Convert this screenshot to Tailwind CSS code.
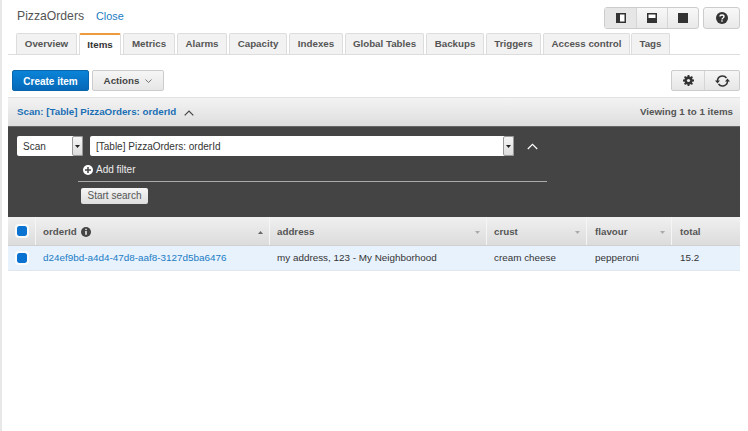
<!DOCTYPE html>
<html lang="en">
<head>
  <meta charset="UTF-8" />
  <title>PizzaOrders</title>
  <script src="https://cdn.jsdelivr.net/npm/@tailwindcss/browser@4"></script>
</head>
<body class="bg-white w-[748px] h-[431px] overflow-hidden font-['Liberation_Sans',Arial,sans-serif] text-[#444]">
  <div class="h-[431px] w-[748px] pl-[6px] pr-[8px] border-l-2 border-[#e8e8e8]">

    <!-- Title row -->
    <div class="h-[33px] flex items-start">
      <span class="text-[12.2px] ml-[9px] mt-[8px] text-[#555] leading-4">PizzaOrders</span>
      <a class="text-[10.8px] ml-[12px] mt-[8px] text-[#1a7cc4] leading-4">Close</a>
      <div class="ml-auto mt-[7px] flex gap-[4px]">
        <div class="flex h-[22px] border border-[#ccc] rounded-[3px] bg-linear-to-b from-[#f8f8f8] to-[#e9e9e9]">
          <div class="w-[32px] flex items-center justify-center bg-[#e6e6e6] border-r border-[#d5d5d5]">
            <svg width="10" height="10" viewBox="0 0 10 10"><rect x="0.75" y="0.75" width="8.5" height="8.5" fill="#fff" stroke="#333" stroke-width="1.5"/><rect x="0" y="0" width="4" height="10" fill="#333"/></svg>
          </div>
          <div class="w-[31px] flex items-center justify-center border-r border-[#d5d5d5]">
            <svg width="10" height="10" viewBox="0 0 10 10"><rect x="0.75" y="0.75" width="8.5" height="8.5" fill="#fff" stroke="#333" stroke-width="1.5"/><rect x="0" y="5" width="10" height="5" fill="#333"/></svg>
          </div>
          <div class="w-[30px] flex items-center justify-center">
            <svg width="10" height="10" viewBox="0 0 10 10"><rect width="10" height="10" fill="#333"/></svg>
          </div>
        </div>
        <div class="w-[37px] h-[22px] border border-[#ccc] rounded-[3px] bg-linear-to-b from-[#f8f8f8] to-[#e9e9e9] flex items-center justify-center">
          <svg width="12" height="12" viewBox="0 0 12 12"><circle cx="6" cy="6" r="6" fill="#333"/><path d="M4 4.6C4 3.5 4.9 3 6 3s2 .6 2 1.6c0 1.5-2 1.3-2 2.8" fill="none" stroke="#fff" stroke-width="1.4"/><rect x="5.3" y="8.3" width="1.4" height="1.4" fill="#fff"/></svg>
        </div>
      </div>
    </div>

    <!-- Tabs -->
    <div class="h-[22px] flex border-b border-[#ddd] pl-[8px] text-[9.75px] font-bold text-[#555]">
      <div class="w-[61px] h-[21px] mr-[2px] pt-[1px] bg-[#f2f2f2] border border-b-0 border-[#ddd] rounded-t-[2px] flex items-center justify-center">Overview</div>
      <div class="w-[42px] h-[22px] mr-[2px] pt-[1px] bg-white border border-b-0 border-[#ddd] border-t-2 border-t-[#ec9a3c] rounded-t-[2px] flex items-center justify-center text-[#333]">Items</div>
      <div class="w-[52px] h-[21px] mr-[2px] pt-[1px] bg-[#f2f2f2] border border-b-0 border-[#ddd] rounded-t-[2px] flex items-center justify-center">Metrics</div>
      <div class="w-[50px] h-[21px] mr-[2px] pt-[1px] bg-[#f2f2f2] border border-b-0 border-[#ddd] rounded-t-[2px] flex items-center justify-center">Alarms</div>
      <div class="w-[58px] h-[21px] mr-[2px] pt-[1px] bg-[#f2f2f2] border border-b-0 border-[#ddd] rounded-t-[2px] flex items-center justify-center">Capacity</div>
      <div class="w-[54px] h-[21px] mr-[2px] pt-[1px] bg-[#f2f2f2] border border-b-0 border-[#ddd] rounded-t-[2px] flex items-center justify-center">Indexes</div>
      <div class="w-[79px] h-[21px] mr-[2px] pt-[1px] bg-[#f2f2f2] border border-b-0 border-[#ddd] rounded-t-[2px] flex items-center justify-center">Global Tables</div>
      <div class="w-[58px] h-[21px] mr-[2px] pt-[1px] bg-[#f2f2f2] border border-b-0 border-[#ddd] rounded-t-[2px] flex items-center justify-center">Backups</div>
      <div class="w-[55px] h-[21px] mr-[2px] pt-[1px] bg-[#f2f2f2] border border-b-0 border-[#ddd] rounded-t-[2px] flex items-center justify-center">Triggers</div>
      <div class="w-[87px] h-[21px] mr-[1px] pt-[1px] bg-[#f2f2f2] border border-b-0 border-[#ddd] rounded-t-[2px] flex items-center justify-center">Access control</div>
      <div class="w-[39px] h-[21px] pt-[1px] bg-[#f2f2f2] border border-b-0 border-[#ddd] rounded-t-[2px] flex items-center justify-center">Tags</div>
    </div>

    <!-- Toolbar -->
    <div class="h-[42px] flex items-start pt-[15px] pl-[4px]">
      <button class="w-[77px] h-[21px] pt-[1px] rounded-[2px] bg-linear-to-b from-[#0a84d8] to-[#0668b8] border border-[#0a66ac] text-white text-[10px] font-bold">Create item</button>
      <button class="w-[72px] h-[21px] pt-[1px] ml-[3px] rounded-[2px] bg-linear-to-b from-[#f6f6f6] to-[#e6e6e6] border border-[#ccc] text-[#444] text-[9.75px] font-bold flex items-center justify-center gap-[6px]">
        Actions
        <svg width="7" height="4" viewBox="0 0 7 4"><path d="M.5.5l3 3 3-3" fill="none" stroke="#555" stroke-width=".8"/></svg>
      </button>
      <div class="ml-auto flex h-[21px] border border-[#ccc] rounded-[2px] bg-linear-to-b from-[#f6f6f6] to-[#e6e6e6]">
        <div class="w-[33px] flex items-center justify-center border-r border-[#d5d5d5]">
          <svg width="11" height="11" viewBox="0 0 11 11"><circle cx="5.5" cy="5.5" r="3" fill="none" stroke="#333" stroke-width="2.4"/><path d="M5.5 0v11M0 5.5h11M1.6 1.6l7.8 7.8M9.4 1.6l-7.8 7.8" stroke="#333" stroke-width="1.8"/><circle cx="5.5" cy="5.5" r="1.6" fill="#eee"/></svg>
        </div>
        <div class="w-[34px] flex items-center justify-center">
          <svg width="15" height="12" viewBox="0 0 15 12"><path d="M2.5 6a5 5 0 0 1 9-3" fill="none" stroke="#333" stroke-width="1.5"/><path d="M12.5 6a5 5 0 0 1-9 3" fill="none" stroke="#333" stroke-width="1.5"/><path d="M0 5.5h5L2.5 8.5zM10 6.5h5L12.5 3.5z" fill="#333"/></svg>
        </div>
      </div>
    </div>

    <!-- Scan header -->
    <div class="h-[29px] pt-[1px] bg-linear-to-b from-[#f3f3f3] to-[#dedede] border-t border-[#e2e2e2] flex items-center pl-[9px] pr-[7px] text-[9.75px] font-bold">
      <span class="text-[#1a6fb5]">Scan: [Table] PizzaOrders: orderId</span>
      <svg class="ml-[8px]" width="10" height="6" viewBox="0 0 10 6"><path d="M.7 5.3L5 1l4.3 4.3" fill="none" stroke="#444" stroke-width="1.2"/></svg>
      <span class="ml-auto text-[#555]">Viewing 1 to 1 items</span>
    </div>

    <!-- Dark search panel -->
    <div class="h-[91px] bg-[#444] pt-[9px] pl-[9px] border-t border-[#666]">
      <div class="flex items-center h-[20px] text-[10px] text-[#333]">
        <div class="w-[66px] h-[20px] bg-white rounded-[2px] flex items-center pl-[6px] justify-between">
          Scan
          <span class="w-[11px] h-[20px] bg-linear-to-b from-[#f5f5f5] to-[#ddd] border border-[#999] rounded-[2px] flex items-center justify-center">
            <svg width="5" height="3" viewBox="0 0 5 3"><path d="M0 0h5L2.5 3z" fill="#222"/></svg>
          </span>
        </div>
        <div class="w-[424px] h-[20px] ml-[7px] bg-white rounded-[2px] flex items-center pl-[6px] justify-between">
          [Table] PizzaOrders: orderId
          <span class="w-[11px] h-[20px] bg-linear-to-b from-[#f5f5f5] to-[#ddd] border border-[#999] rounded-[2px] flex items-center justify-center">
            <svg width="5" height="3" viewBox="0 0 5 3"><path d="M0 0h5L2.5 3z" fill="#222"/></svg>
          </span>
        </div>
        <svg class="ml-[13px]" width="11" height="7" viewBox="0 0 11 7"><path d="M.8 6L5.5 1.3 10.2 6" fill="none" stroke="#fff" stroke-width="1.2"/></svg>
      </div>
      <div class="ml-[66px] mt-[6px] flex items-center h-[15px] text-[10px] text-[#eee]">
        <svg width="10" height="10" viewBox="0 0 10 10"><circle cx="5" cy="5" r="5" fill="#fff"/><path d="M5 2v6M2 5h6" stroke="#444" stroke-width="1.5"/></svg>
        <span class="ml-[3px]">Add filter</span>
      </div>
      <div class="w-[469px] ml-[61px] mt-[4px] border-t border-[#aaa]"></div>
      <button class="block ml-[64px] mt-[6px] w-[67px] h-[16px] rounded-[2px] bg-linear-to-b from-[#f6f6f6] to-[#ddd] text-[10px] text-[#555] leading-4">Start search</button>
    </div>

    <!-- Table -->
    <div class="h-[29px] flex bg-linear-to-b from-[#f0f0f0] to-[#dcdcdc] text-[9.75px] font-bold text-[#555] border-b border-[#d0d0d0]">
      <div class="w-[28px] flex items-center justify-center border-r border-[#f5f5f5]">
        <span class="w-[10px] h-[10px] rounded-[2px] bg-[#0a72d0] outline-2 outline-[#fff]/80"></span>
      </div>
      <div class="w-[234px] flex items-center pl-[7px] pr-[3px] pt-[2px] border-r border-[#f5f5f5]">
        orderId
        <svg class="ml-[4px]" width="10" height="10" viewBox="0 0 9 9"><circle cx="4.5" cy="4.5" r="4.5" fill="#444"/><path d="M4.5 3.6v3.4" stroke="#fff" stroke-width="1.3"/><rect x="3.9" y="1.6" width="1.2" height="1.2" fill="#fff"/></svg>
        <svg class="ml-auto mr-[3px]" width="5" height="3" viewBox="0 0 5 3"><path d="M0 3h5L2.5 0z" fill="#666"/></svg>
      </div>
      <div class="w-[217px] flex items-center pl-[7px] pr-[3px] pt-[2px] border-r border-[#f5f5f5]">
        address
        <svg class="ml-auto mr-[3px]" width="5" height="3" viewBox="0 0 5 3"><path d="M0 0h5L2.5 3z" fill="#aaa"/></svg>
      </div>
      <div class="w-[100px] flex items-center pl-[7px] pr-[3px] pt-[2px] border-r border-[#f5f5f5]">
        crust
        <svg class="ml-auto mr-[3px]" width="5" height="3" viewBox="0 0 5 3"><path d="M0 0h5L2.5 3z" fill="#aaa"/></svg>
      </div>
      <div class="w-[85px] flex items-center pl-[8px] pr-[3px] pt-[2px] border-r border-[#f5f5f5]">
        flavour
        <svg class="ml-auto mr-[3px]" width="5" height="3" viewBox="0 0 5 3"><path d="M0 0h5L2.5 3z" fill="#aaa"/></svg>
      </div>
      <div class="flex-1 flex items-center pl-[8px] pt-[2px]">total</div>
    </div>
    <div class="h-[25px] flex bg-[#e8f2fd] border-b border-[#dfe6ee] text-[9.9px] text-[#333]">
      <div class="w-[28px] flex items-center justify-center">
        <span class="w-[10px] h-[10px] rounded-[2px] bg-[#0a72d0] outline-2 outline-[#fff]/80"></span>
      </div>
      <div class="w-[234px] flex items-center pl-[7px] pt-[1px] text-[#1a7cc4]">d24ef9bd-a4d4-47d8-aaf8-3127d5ba6476</div>
      <div class="w-[217px] flex items-center pl-[7px] pt-[1px]">my address, 123 - My Neighborhood</div>
      <div class="w-[100px] flex items-center pl-[7px] pt-[1px]">cream cheese</div>
      <div class="w-[85px] flex items-center pl-[8px] pt-[1px]">pepperoni</div>
      <div class="flex-1 flex items-center pl-[8px] pt-[1px]">15.2</div>
    </div>
  </div>
</body>
</html>
